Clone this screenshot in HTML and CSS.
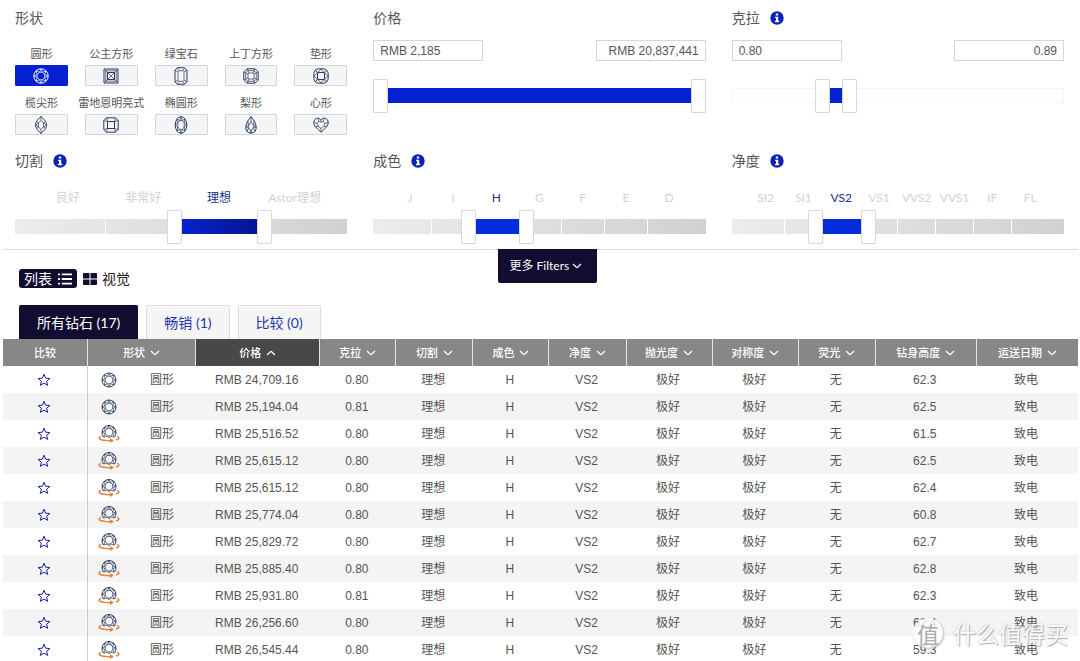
FILE: index.html
```html
<!DOCTYPE html>
<html lang="zh-CN">
<head>
<meta charset="utf-8">
<meta name="viewport" content="width=device-width, initial-scale=1">
<title>钻石筛选</title>
<link rel="stylesheet" href="styles.css">
</head>
<body>
<svg class="sprite" aria-hidden="true">
  <symbol id="round" viewBox="0 0 16 16"><circle cx="8" cy="8" r="7.2"/><path class="fine" d="M15 8 11.7 9.5 13 13 9.5 11.7 8 15 6.5 11.7 3 13 4.3 9.5 1 8 4.3 6.5 3 3 6.5 4.3 8 1 9.5 4.3 13 3 11.7 6.5Z"/><path class="fine" d="M11.7 9.5 9.5 11.7H6.5L4.3 9.5V6.5L6.5 4.3H9.5L11.7 6.5Z"/></symbol>
  <symbol id="princess" viewBox="0 0 16 16"><path d="M1 1H15V15H1Z"/><path class="fine" d="M1 1 15 15M15 1 1 15M2.8 2.8H13.2V13.2H2.8Z"/><path class="hole" d="M4.5 4.5H11.5V11.5H4.5Z"/></symbol>
  <symbol id="emerald" viewBox="0 0 16 18"><path d="M4.5 .7H11.5L14 3.2V14.8L11.5 17.3H4.5L2 14.8V3.2Z"/><path class="fine" d="M6 3.7H10L11 4.7V13.3L10 14.3H6L5 13.3V4.7ZM4.5 .7 6 3.7M11.5 .7 10 3.7M14 3.2 11 4.7M14 14.8 11 13.3M11.5 17.3 10 14.3M4.5 17.3 6 14.3M2 14.8 5 13.3M2 3.2 5 4.7"/></symbol>
  <symbol id="asscher" viewBox="0 0 16 16"><path d="M4 .8H12L15.2 4V12L12 15.2H4L.8 12V4Z"/><path class="fine" d="M4.8 2.7H11.2L13.3 4.8V11.2L11.2 13.3H4.8L2.7 11.2V4.8ZM6 5H10L11 6V10L10 11H6L5 10V6ZM4 .8 6 5M12 .8 10 5M15.2 4 11 6M15.2 12 11 10M12 15.2 10 11M4 15.2 6 11M.8 12 5 10M.8 4 5 6"/></symbol>
  <symbol id="cushion" viewBox="0 0 16 16"><rect x=".8" y=".8" width="14.4" height="14.4" rx="5"/><rect x="4.500" y="4.500" width="7" height="7" rx="1.500"/><path class="fine" d="M8 .8 11 4.6 13.8 2.2 11.5 5 15.2 8 11.5 11 13.8 13.8 11 11.4 8 15.2 5 11.4 2.2 13.8 4.5 11 .8 8 4.5 5 2.2 2.2 5 4.6Z"/></symbol>
  <symbol id="marquise" viewBox="0 0 16 18"><path d="M8 .5C3.6 4.5 2.4 7 2.4 9S3.6 13.5 8 17.5C12.4 13.5 13.6 11 13.6 9S12.4 4.5 8 .5Z"/><path class="fine" d="M8 4.5 10.5 7V11L8 13.5 5.5 11V7ZM8 .5V4.500M8 13.5V17.5M10.5 7 12.6 5.5M10.5 7 13.6 9 10.5 11 12.6 12.5M5.5 7 3.4 5.5M5.5 7 2.4 9 5.5 11 3.4 12.5"/></symbol>
  <symbol id="radiant" viewBox="0 0 16 16"><path d="M3.5 .8H12.5L15.2 3.5V12.5L12.5 15.2H3.5L.8 12.5V3.5Z"/><path class="fine" d="M3.5 .8 4.5 4.5M12.5 .8 11.5 4.5M15.2 3.5 11.5 4.5M15.2 12.5 11.5 11.5M12.5 15.2 11.5 11.5M3.5 15.2 4.5 11.5M.8 12.5 4.5 11.5M.8 3.5 4.5 4.5"/><path d="M4.5 4.5H11.5V11.5H4.5Z"/></symbol>
  <symbol id="oval" viewBox="0 0 16 18"><ellipse cx="8" cy="9" rx="5.8" ry="8.3"/><path class="fine" d="M6.700 4.500H9.300L11.200 7.200V10.800L9.300 13.500H6.700L4.800 10.800V7.200ZM8 .7 9.300 4.500M12 3.200 9.300 4.500M12 3.200 11.200 7.200 13.800 9 11.200 10.800 12 14.800 9.300 13.500 8 17.300 6.700 13.500 4 14.800 4.800 10.800 2.200 9 4.800 7.200 4 3.200 6.700 4.500 8 .7"/></symbol>
  <symbol id="pear" viewBox="0 0 16 18"><path d="M8 .6C5 4 2.8 8 2.8 11.800A5.200 5.400 0 0 0 13.200 11.800C13.200 8 11 4 8 .6Z"/><path class="fine" d="M8 6 10.300 9V12L8.800 14H7.200L5.700 12V9ZM8 .6V6M10.300 9 11.200 5.200M10.300 9 13.200 11 10.300 12 12 15.500M8.800 14 8 17.200 7.200 14M4 15.500 5.700 12 2.800 11 5.700 9 4.800 5.200"/></symbol>
  <symbol id="heart" viewBox="0 0 16 16"><path d="M8 3.200C6.500 .8 3.500 .6 1.800 2.500 .2 4.500 .6 7.500 2.300 9.600 4 11.700 6 13.200 8 15.200 10 13.200 12 11.700 13.700 9.600 15.400 7.500 15.800 4.500 14.200 2.500 12.500 .6 9.500 .8 8 3.200Z"/><path class="fine" d="M8 5.200 10.400 4.400 12 6.800 10.800 9.200 8 11.600 5.200 9.200 4 6.800 5.600 4.400ZM8 3.200V5.200M10.400 4.400 11 1.400M12 6.800 15 5M10.800 9.200 13.700 9.600M8 11.600V15.200M5.200 9.200 2.300 9.600M4 6.800 1 5M5.600 4.400 5 1.400"/></symbol>
  <symbol id="gem" viewBox="0 0 22 20"><circle cx="11" cy="10" r="7"/><path class="fine" d="M18 10 14.700 11.500 16 15 12.500 13.700 11 17 9.500 13.700 6 15 7.300 11.500 4 10 7.300 8.500 6 5 9.500 6.300 11 3 12.500 6.300 16 5 14.700 8.500Z"/><path class="fine" d="M14.700 11.500 12.500 13.700H9.500L7.300 11.500V8.500L9.500 6.300H12.500L14.700 8.500Z"/></symbol>
  <symbol id="gem360" viewBox="0 0 22 20"><path d="M5.600 13A7 7 0 1 1 16.400 13"/><path class="fine" d="M5.600 13 7.300 9.700 4 8.200 7.300 6.700 6 3.200 9.500 4.500 11 1.500 12.500 4.500 16 3.200 14.700 6.700 18 8.200 14.700 9.700 16.400 13 12.500 12 11 14 9.500 12ZM14.700 9.700 12.500 12H9.500L7.300 9.700V6.700L9.500 4.500H12.500L14.700 6.700Z"/><path class="spin" d="M3.200 12.300C-1 14 .5 16.500 12.500 16.700M18 16C21.500 15 22 13.600 19 12.300"/><path class="spin-head" d="M12 14.200 16 16.600 12 19Z"/></symbol>
  <symbol id="star" viewBox="0 0 14 14"><path d="M7 1.200 8.600 5.200 12.900 5.500 9.600 8.200 10.700 12.400 7 10.100 3.300 12.400 4.400 8.200 1.100 5.500 5.400 5.200Z"/></symbol>
  <symbol id="down" viewBox="0 0 10 6"><path d="M1 1 4.400 4.300Q5 4.800 5.600 4.300L9 1"/></symbol>
  <symbol id="up" viewBox="0 0 10 6"><path d="M1 5 4.400 1.700Q5 1.200 5.600 1.700L9 5"/></symbol>
  <symbol id="info" viewBox="0 0 14 14"><circle cx="7" cy="7" r="6.7"/><path class="mark" d="M5.800 2.500H8.200V4.500H5.800ZM5 5.700H8.200V9.800H9.200V11.200H4.900V9.800H6V7H5Z"/></symbol>
</svg>

<main>
<section class="filters">
  <div class="filter">
    <h2>形状</h2>
    <div class="shapes">
      <button type="button" class="shape active" aria-pressed="true"><span>圆形</span><i><svg><use href="#round"/></svg></i></button>
      <button type="button" class="shape"><span>公主方形</span><i><svg><use href="#princess"/></svg></i></button>
      <button type="button" class="shape"><span>绿宝石</span><i><svg class="tall"><use href="#emerald"/></svg></i></button>
      <button type="button" class="shape"><span>上丁方形</span><i><svg><use href="#asscher"/></svg></i></button>
      <button type="button" class="shape"><span>垫形</span><i><svg><use href="#cushion"/></svg></i></button>
      <button type="button" class="shape"><span>榄尖形</span><i><svg class="tall"><use href="#marquise"/></svg></i></button>
      <button type="button" class="shape"><span>雷地恩明亮式</span><i><svg><use href="#radiant"/></svg></i></button>
      <button type="button" class="shape"><span>椭圆形</span><i><svg class="tall"><use href="#oval"/></svg></i></button>
      <button type="button" class="shape"><span>梨形</span><i><svg class="tall"><use href="#pear"/></svg></i></button>
      <button type="button" class="shape"><span>心形</span><i><svg><use href="#heart"/></svg></i></button>
    </div>
  </div>

  <div class="filter">
    <h2>价格</h2>
    <div class="bounds">
      <input type="text" aria-label="最低价格" value="RMB 2,185">
      <input type="text" aria-label="最高价格" value="RMB 20,837,441">
    </div>
    <div class="slider" style="--from:0;--to:1">
      <div class="track plain"></div><div class="fill"></div>
      <input type="range" aria-label="最低价格" min="0" max="100" step="0.1" value="0">
      <input type="range" aria-label="最高价格" min="0" max="100" step="0.1" value="100">
    </div>
  </div>

  <div class="filter">
    <h2>克拉 <svg class="info"><use href="#info"/></svg></h2>
    <div class="bounds">
      <input type="text" aria-label="最小克拉" value="0.80">
      <input type="text" aria-label="最大克拉" value="0.89">
    </div>
    <div class="slider" style="--from:.263;--to:.348">
      <div class="track plain"></div><div class="fill"></div>
      <input type="range" aria-label="最小克拉" min="0" max="100" step="0.1" value="26.3">
      <input type="range" aria-label="最大克拉" min="0" max="100" step="0.1" value="34.8">
    </div>
  </div>

  <div class="filter">
    <h2>切割 <svg class="info"><use href="#info"/></svg></h2>
    <div class="grades"><span>良好</span><span>非常好</span><span class="on">理想</span><span>Astor理想</span></div>
    <div class="slider" style="--from:.479;--to:.763">
      <div class="track"><b></b><b></b><b></b><b></b></div><div class="fill deep"></div>
      <input type="range" aria-label="最低切割" min="0" max="100" step="0.1" value="47.9">
      <input type="range" aria-label="最高切割" min="0" max="100" step="0.1" value="76.3">
    </div>
  </div>

  <div class="filter">
    <h2>成色 <svg class="info"><use href="#info"/></svg></h2>
    <div class="grades"><span>J</span><span>I</span><span class="on">H</span><span>G</span><span>F</span><span>E</span><span>D</span></div>
    <div class="slider" style="--from:.277;--to:.458">
      <div class="track"><b></b><b></b><b></b><b></b><b></b><b></b><b></b></div><div class="fill bright"></div>
      <input type="range" aria-label="最低成色" min="0" max="100" step="0.1" value="27.7">
      <input type="range" aria-label="最高成色" min="0" max="100" step="0.1" value="45.8">
    </div>
  </div>

  <div class="filter">
    <h2>净度 <svg class="info"><use href="#info"/></svg></h2>
    <div class="grades"><span>SI2</span><span>SI1</span><span class="on">VS2</span><span>VS1</span><span>VVS2</span><span>VVS1</span><span>IF</span><span>FL</span></div>
    <div class="slider" style="--from:.241;--to:.407">
      <div class="track"><b></b><b></b><b></b><b></b><b></b><b></b><b></b><b></b></div><div class="fill bright"></div>
      <input type="range" aria-label="最低净度" min="0" max="100" step="0.1" value="24.1">
      <input type="range" aria-label="最高净度" min="0" max="100" step="0.1" value="40.7">
    </div>
  </div>
</section>

<section class="results">
  <div class="toolbar">
    <div class="views">
      <button type="button" class="view active">列表
        <svg viewBox="0 0 15 12"><path d="M0 1H2M0 6H2M0 11H2M4 1H15M4 6H15M4 11H15"/></svg></button>
      <button type="button" class="view">
        <svg viewBox="0 0 14 12"><path class="tile" d="M1 0H5.500Q6.500 0 6.500 1V5.500H0V1Q0 0 1 0ZM7.500 0H13Q14 0 14 1V5.500H7.500ZM0 6.500H6.500V12H1Q0 12 0 11ZM7.500 6.500H14V11Q14 12 13 12H7.500Z"/></svg>视觉</button>
    </div>
    <button type="button" class="more">更多 Filters <svg class="chev"><use href="#down"/></svg></button>
  </div>

  <div class="tabs">
    <button type="button" class="tab active">所有钻石 (17)</button>
    <button type="button" class="tab">畅销 (1)</button>
    <button type="button" class="tab">比较 (0)</button>
  </div>

  <table>
    <colgroup><col class="w-compare"><col class="w-shape"><col class="w-price"><col class="w-s"><col class="w-t"><col class="w-s"><col class="w-t"><col class="w-m"><col class="w-m"><col class="w-t"><col class="w-l"><col class="w-l"></colgroup>
    <thead>
      <tr>
        <th>比较</th>
        <th><button type="button">形状<svg class="chev"><use href="#down"/></svg></button></th>
        <th class="sorted" aria-sort="ascending"><button type="button">价格<svg class="chev"><use href="#up"/></svg></button></th>
        <th><button type="button">克拉<svg class="chev"><use href="#down"/></svg></button></th>
        <th><button type="button">切割<svg class="chev"><use href="#down"/></svg></button></th>
        <th><button type="button">成色<svg class="chev"><use href="#down"/></svg></button></th>
        <th><button type="button">净度<svg class="chev"><use href="#down"/></svg></button></th>
        <th><button type="button">抛光度<svg class="chev"><use href="#down"/></svg></button></th>
        <th><button type="button">对称度<svg class="chev"><use href="#down"/></svg></button></th>
        <th><button type="button">荧光<svg class="chev"><use href="#down"/></svg></button></th>
        <th><button type="button">钻身高度<svg class="chev"><use href="#down"/></svg></button></th>
        <th><button type="button">运送日期<svg class="chev"><use href="#down"/></svg></button></th>
      </tr>
    </thead>
    <tbody>
      <tr><td><button type="button" class="star" aria-label="比较"><svg><use href="#star"/></svg></button></td><td><div class="cut"><svg class="gem"><use href="#gem"/></svg>圆形</div></td><td>RMB 24,709.16</td><td>0.80</td><td>理想</td><td>H</td><td>VS2</td><td>极好</td><td>极好</td><td>无</td><td>62.3</td><td>致电</td></tr>
      <tr><td><button type="button" class="star" aria-label="比较"><svg><use href="#star"/></svg></button></td><td><div class="cut"><svg class="gem"><use href="#gem"/></svg>圆形</div></td><td>RMB 25,194.04</td><td>0.81</td><td>理想</td><td>H</td><td>VS2</td><td>极好</td><td>极好</td><td>无</td><td>62.5</td><td>致电</td></tr>
      <tr><td><button type="button" class="star" aria-label="比较"><svg><use href="#star"/></svg></button></td><td><div class="cut"><svg class="gem"><use href="#gem360"/></svg>圆形</div></td><td>RMB 25,516.52</td><td>0.80</td><td>理想</td><td>H</td><td>VS2</td><td>极好</td><td>极好</td><td>无</td><td>61.5</td><td>致电</td></tr>
      <tr><td><button type="button" class="star" aria-label="比较"><svg><use href="#star"/></svg></button></td><td><div class="cut"><svg class="gem"><use href="#gem360"/></svg>圆形</div></td><td>RMB 25,615.12</td><td>0.80</td><td>理想</td><td>H</td><td>VS2</td><td>极好</td><td>极好</td><td>无</td><td>62.5</td><td>致电</td></tr>
      <tr><td><button type="button" class="star" aria-label="比较"><svg><use href="#star"/></svg></button></td><td><div class="cut"><svg class="gem"><use href="#gem360"/></svg>圆形</div></td><td>RMB 25,615.12</td><td>0.80</td><td>理想</td><td>H</td><td>VS2</td><td>极好</td><td>极好</td><td>无</td><td>62.4</td><td>致电</td></tr>
      <tr><td><button type="button" class="star" aria-label="比较"><svg><use href="#star"/></svg></button></td><td><div class="cut"><svg class="gem"><use href="#gem360"/></svg>圆形</div></td><td>RMB 25,774.04</td><td>0.80</td><td>理想</td><td>H</td><td>VS2</td><td>极好</td><td>极好</td><td>无</td><td>60.8</td><td>致电</td></tr>
      <tr><td><button type="button" class="star" aria-label="比较"><svg><use href="#star"/></svg></button></td><td><div class="cut"><svg class="gem"><use href="#gem360"/></svg>圆形</div></td><td>RMB 25,829.72</td><td>0.80</td><td>理想</td><td>H</td><td>VS2</td><td>极好</td><td>极好</td><td>无</td><td>62.7</td><td>致电</td></tr>
      <tr><td><button type="button" class="star" aria-label="比较"><svg><use href="#star"/></svg></button></td><td><div class="cut"><svg class="gem"><use href="#gem360"/></svg>圆形</div></td><td>RMB 25,885.40</td><td>0.80</td><td>理想</td><td>H</td><td>VS2</td><td>极好</td><td>极好</td><td>无</td><td>62.8</td><td>致电</td></tr>
      <tr><td><button type="button" class="star" aria-label="比较"><svg><use href="#star"/></svg></button></td><td><div class="cut"><svg class="gem"><use href="#gem360"/></svg>圆形</div></td><td>RMB 25,931.80</td><td>0.81</td><td>理想</td><td>H</td><td>VS2</td><td>极好</td><td>极好</td><td>无</td><td>62.3</td><td>致电</td></tr>
      <tr><td><button type="button" class="star" aria-label="比较"><svg><use href="#star"/></svg></button></td><td><div class="cut"><svg class="gem"><use href="#gem360"/></svg>圆形</div></td><td>RMB 26,256.60</td><td>0.80</td><td>理想</td><td>H</td><td>VS2</td><td>极好</td><td>极好</td><td>无</td><td>62.4</td><td>致电</td></tr>
      <tr><td><button type="button" class="star" aria-label="比较"><svg><use href="#star"/></svg></button></td><td><div class="cut"><svg class="gem"><use href="#gem360"/></svg>圆形</div></td><td>RMB 26,545.44</td><td>0.80</td><td>理想</td><td>H</td><td>VS2</td><td>极好</td><td>极好</td><td>无</td><td>59.3</td><td>致电</td></tr>
    </tbody>
  </table>
</section>
</main>
<div class="watermark"><span class="seal">值</span><span>什么值得买</span></div>
</body>
</html>
```
FILE: styles.css
```css
* { box-sizing: border-box; }

:root {
  --ink: #555;
  --blue: #0420d0;
  --night: #110c30;
  --latin: Lato, "Noto Sans CJK SC", sans-serif;
  --data: "Liberation Sans", "Noto Sans CJK SC", sans-serif;
}

body {
  margin: 0;
  background: #fff;
  color: var(--ink);
  font: 12px/16px var(--latin);
  overflow-x: hidden;
}

button {
  padding: 0;
  border: 0;
  background: none;
  color: inherit;
  font: inherit;
  cursor: pointer;
}

svg { display: block; fill: none; stroke: currentColor; }
.fine { stroke-width: .7; }
.sprite { position: absolute; width: 0; height: 0; }

/* Filters */
.filters {
  display: grid;
  grid-template-columns: repeat(3, minmax(0, 1fr));
  gap: 16px 26px;
  margin: 0 2px 0 3px;
  padding: 8px 14px 5px 12px;
  border-bottom: 1px solid #dcdcdc;
}

h2 {
  display: flex;
  align-items: center;
  gap: 10px;
  margin: 0;
  font-size: 14px;
  font-weight: 400;
  line-height: 20px;
}

.info { width: 14px; height: 14px; fill: #0a22b8; stroke: none; }
.mark { fill: #fff; }

.shapes {
  display: grid;
  grid-template-columns: repeat(5, minmax(0, 1fr));
  gap: 9px 17px;
  margin-top: 18px;
}

.shape {
  display: flex;
  flex-direction: column;
  align-items: center;
  gap: 3px;
  font-size: 11px;
  line-height: 16px;
  white-space: nowrap;
}

.shape i {
  display: flex;
  align-items: center;
  justify-content: center;
  width: 100%;
  height: 21px;
  border: 1px solid #d3d5d8;
  border-radius: 1px;
  background: #f4f5f6;
  color: #2c3a5c;
}

.shape svg { width: 16px; height: 16px; }
.shape svg.tall { width: 16px; height: 18px; }
.shape .hole { fill: #f4f5f6; }
.shape.active i { border-color: var(--blue); background: var(--blue); color: #fff; }

.bounds {
  display: flex;
  justify-content: space-between;
  margin: 12px 0 18px;
}

.bounds input {
  width: 110px;
  height: 21px;
  padding: 0 6px;
  border: 1px solid #d6d6d6;
  background: #fff;
  color: var(--ink);
  font: 12px/16px var(--data);
}

.bounds input:last-child { text-align: right; }

.grades {
  display: flex;
  margin: 19px 0 4px;
  padding: 0 15px;
  color: #d2d2d2;
}

.grades span {
  display: flex;
  flex: 1 1 0;
  justify-content: center;
  min-width: 0;
  white-space: nowrap;
}

.grades .on { color: #1a2f8c; }

.slider {
  position: relative;
  height: 34px;
  padding-top: 9px;
}

.track {
  display: flex;
  height: 15px;
  padding: 0 15px;
  background: linear-gradient(100deg, #ececec, #d0d1d3);
}

.track b { flex: 1; border-right: 1px solid #fff; }
.track b:last-child { border: 0; }
.track.plain { border: 1px solid #f5f5f5; background: #fff; }

.fill {
  position: absolute;
  top: 9px;
  left: calc(7px + (100% - 15px) * var(--from));
  width: calc((100% - 15px) * (var(--to) - var(--from)));
  height: 15px;
  background: var(--blue);
}

.fill.deep { background: linear-gradient(90deg, #0424d0, #06148f); }
.fill.bright { background: #052cdc; }

.slider input {
  position: absolute;
  inset: 0;
  width: 100%;
  height: 34px;
  margin: 0;
  background: none;
  appearance: none;
  pointer-events: none;
}

.slider input::-webkit-slider-thumb {
  width: 15px;
  height: 34px;
  border: 1px solid #d8d8d8;
  border-radius: 1px;
  background: #fff;
  appearance: none;
  pointer-events: auto;
}

/* Results */
.results { margin: 0 2px 0 3px; }
.toolbar { display: flex; align-items: flex-start; }

.views {
  display: flex;
  gap: 6px;
  width: 46%;
  padding: 19px 0 0 16px;
}

.view {
  display: flex;
  align-items: center;
  gap: 6px;
  height: 19px;
  color: #222;
  font-size: 14px;
  line-height: 19px;
}

.view svg { width: 14px; height: 12px; stroke-width: 2; }
.view .tile { fill: var(--night); stroke: none; }
.view:last-child { gap: 5px; }

.view.active {
  padding: 0 5px;
  border-radius: 3px;
  background: var(--night);
  color: #fff;
}

.more {
  display: flex;
  align-items: center;
  gap: 3px;
  height: 34px;
  margin-top: -1px;
  padding: 0 15px 0 12px;
  border-radius: 0 0 2px 2px;
  background: var(--night);
  color: #fff;
}

.chev { width: 10px; height: 6px; stroke-width: 1.2; }

.tabs {
  display: flex;
  gap: 8px;
  margin-top: 22px;
  padding-left: 16px;
}

.toolbar + .tabs { margin-top: 17px; }

.tab {
  height: 34px;
  padding: 0 17px;
  border: 1px solid #dcdde0;
  border-bottom: 0;
  border-radius: 2px 2px 0 0;
  background: #f5f5f6;
  color: #2236b0;
  font-size: 14px;
}

.tab.active { border-color: var(--night); background: var(--night); color: #fff; }

table {
  width: 100%;
  border-collapse: separate;
  border-spacing: 0;
  table-layout: fixed;
  font-family: var(--data);
}

.w-compare { width: 85px; }
.w-shape { width: 108px; }
.w-price { width: 124px; }
.w-s { width: 76px; }
.w-t { width: 77px; }
.w-m { width: 86px; }
.w-l { width: 101px; }

th, td { height: 27px; padding: 0; text-align: center; }
td { padding-right: 3px; }

th {
  border-right: 1px solid #e4e4e4;
  background: #878787;
  color: #fff;
  font-size: 11px;
  font-weight: 500;
}

th:last-child { border-right: 0; }
th.sorted { background: #484848; }

th button {
  display: flex;
  align-items: center;
  justify-content: center;
  gap: 5px;
  width: 100%;
}

tbody tr:nth-child(even) { background: #f4f4f4; }
td:first-child { border-right: 1px solid #ccc; }

.star { display: block; margin: 0 auto; color: #1c1fa8; }
.star svg { width: 14px; height: 14px; }

.cut { display: flex; align-items: center; gap: 30px; padding-left: 10px; }
.gem { width: 22px; height: 20px; color: #2c3a5c; }
.spin { stroke: #e58236; stroke-width: 1.4; }
.spin-head { fill: #e58236; stroke: none; }

/* Site watermark over the table */
.watermark {
  position: absolute;
  right: 12px;
  top: 618px;
  display: flex;
  align-items: center;
  gap: 10px;
  color: #fff;
  font: 23px/30px "Noto Sans CJK SC", sans-serif;
  text-shadow: 1px 1px 1px #999, 0 0 2px #aaa;
  opacity: .8;
  pointer-events: none;
}

.seal {
  width: 30px;
  height: 30px;
  border-radius: 50%;
  background: #fff;
  box-shadow: 1px 1px 2px #aaa;
  color: #999;
  font-size: 22px;
  text-align: center;
  text-shadow: none;
}
```
